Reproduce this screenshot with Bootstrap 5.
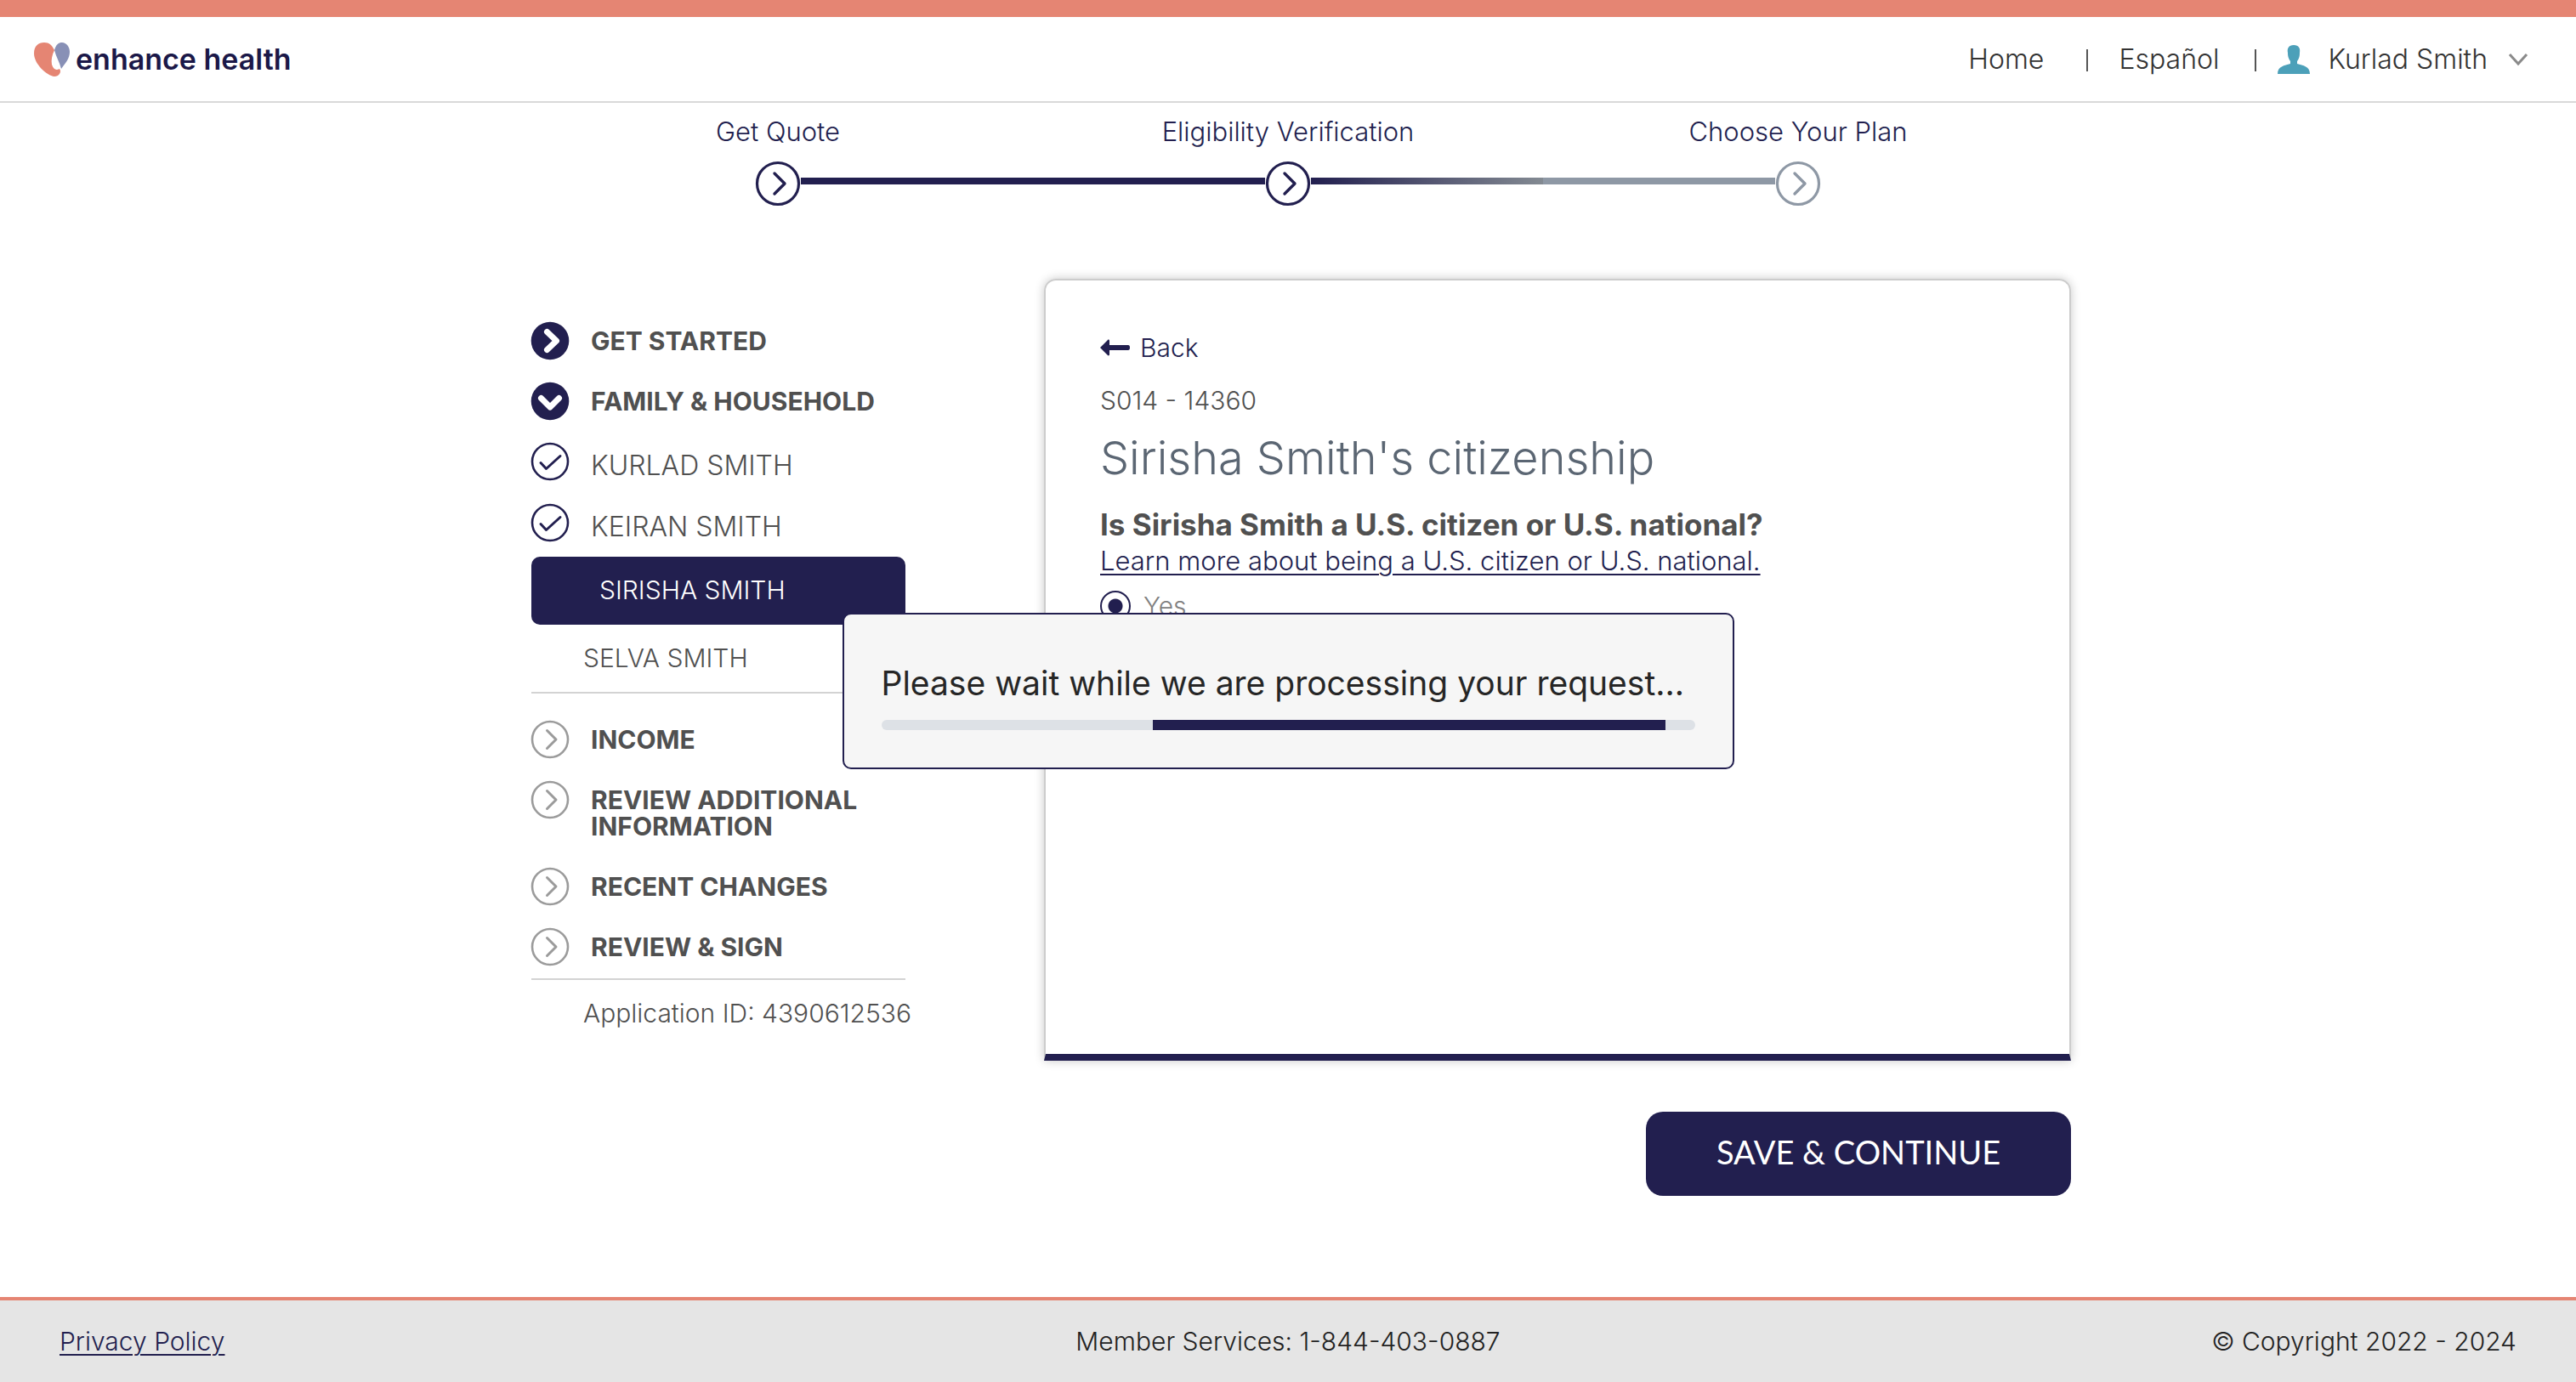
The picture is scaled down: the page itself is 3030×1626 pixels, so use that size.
<!DOCTYPE html>
<html lang="en">
<head>
<meta charset="utf-8">
<meta name="viewport" content="width=device-width, initial-scale=1">
<title>Enhance Health - Eligibility Verification</title>
<link href="https://cdn.jsdelivr.net/npm/bootstrap@5.3.0/dist/css/bootstrap.min.css" rel="stylesheet">
<style>
:root{--navy:#221f4f;--coral:#e58573;--slate:#8e98a5;--ink:#505050}
body{font-family:Inter,"Noto Sans",sans-serif;font-size:30px;font-weight:300;line-height:34px;color:#2c2c2c;background:#fff}
a{color:var(--navy)}
.site-head{border-top:20px solid var(--coral);border-bottom:2px solid #d9d9d9;height:121px;padding:0 56px 0 40px}
.brand{color:#1b1848;font-size:34px;font-weight:600;gap:6px}
.head-nav{font-size:32px}
.head-nav a,.head-nav button{color:#333;font-weight:300;font-size:32px;line-height:34px}
.bar{width:2px;height:26px;background:#555;margin:2px 24px 0 42px}
.bar.wide{margin:2px 36px 0 50px}
.stepper{max-width:1800px;padding-top:17px;color:var(--navy);font-size:31px}
.stepper li{flex:1 1 0;text-align:center}
.track{margin-top:18px;height:52px}
.track svg{width:54px;height:54px;flex:none}
.track span{flex:1;height:8px;margin-bottom:6px}
.done{background:var(--navy)}
.fade-out{background:linear-gradient(90deg,var(--navy),#838a92)}
.todo{background:var(--slate)}
.pending{color:var(--slate)}
.work{max-width:1842px;margin-top:86px;padding-left:31px}
.side{width:440px;padding-top:51px;color:var(--ink);flex:none}
.side a{color:var(--ink);text-decoration:none}
.side svg{width:46px;height:46px;flex:none;margin:-1px}
.side li>a{display:flex;gap:26px;font-size:30px;line-height:31px}
.side .sec>a{font-weight:700;padding-bottom:26px}
.side .sec span{padding:7px 0}
.side .sub>a{font-size:32px;padding-bottom:28px}
.side .sub span{padding-top:11px}
.side .sub.tight>a{padding-bottom:18px}
.side li.now>a{background:var(--navy);color:#fff;border-radius:10px;padding:24px 80px;height:80px}
.side li.plain>a{padding:24px 61px;border-bottom:2px solid #d3d3d3;margin-bottom:32px}
.side li.last>a{padding-bottom:14px;border-bottom:2px solid #d3d3d3}
.app-id{padding:24px 0 0 61px;line-height:31px;white-space:nowrap}
.sheet{min-height:920px;border:2px solid #ccc;border-bottom:8px solid var(--navy);border-radius:14px 14px 0 0;box-shadow:0 0 12px rgba(0,0,0,.22);padding:62px 64px;color:var(--ink)}
.pane{max-width:1208px}
.back{text-decoration:none;gap:12px}
.code{margin-top:28px}
.sheet h1{font-size:54px;line-height:60px;font-weight:300;color:#5b6673;margin:21px 0 28px}
.sheet h2{font-size:35px;line-height:40px;font-weight:700;margin:0}
.more{margin:6px 0 18px;font-size:31px;line-height:34px}
.more a{text-underline-offset:4px;text-decoration-thickness:2px}
.answer{gap:15px;padding:0;margin:0;min-height:0}
.answer .form-check-input{float:none;margin:0;width:36px;height:36px;border:2px solid var(--navy);background:#fff radial-gradient(circle,var(--navy) 0 8px,transparent 9px)}
.answer label{color:#808080}
.go{background:var(--navy)!important;color:#fff!important;width:500px;height:99px;border:0;border-radius:20px;margin-top:60px;padding:0 0 4px;font-family:Lato,sans-serif;font-size:38px;font-weight:400}
.site-foot{border-top:4px solid var(--coral);background:#e5e5e5;height:100px;padding:0 70px;color:#222}
.site-foot>*{flex:1}
.site-foot a{text-underline-offset:4px;text-decoration-thickness:2px}
.wait .modal-dialog{max-width:1049px}
.wait .modal-content{background:#f6f6f6;border:2px solid var(--navy);border-radius:10px;padding:60px 44px 44px;color:#262626}
.wait p{font-size:39px;line-height:42px;font-weight:400;margin:0 0 22px;white-space:nowrap}
.wait .progress{height:12px;border-radius:6px;background:#dde1e6}
.wait .progress-bar{background:var(--navy)}
</style>
</head>
<body class="d-flex flex-column min-vh-100">
<svg class="d-none" aria-hidden="true">
<symbol id="next" viewBox="0 0 46 46"><circle cx="23" cy="23" r="21" fill="none" stroke="currentColor" stroke-width="2.6"/><path d="M19.5 12.5 30 23 19.5 33.5" fill="none" stroke="currentColor" stroke-width="3" stroke-linecap="round" stroke-linejoin="round"/></symbol>
<symbol id="tick" viewBox="0 0 46 46"><circle cx="23" cy="23" r="21" fill="none" stroke="#221f4f" stroke-width="2.6"/><path d="m12 24.5 6.500 7L35 16.500" fill="none" stroke="#221f4f" stroke-width="3" stroke-linecap="round" stroke-linejoin="round"/></symbol>
<symbol id="solid" viewBox="0 0 46 46"><circle cx="23" cy="23" r="22.300" fill="#221f4f"/><path d="M19.500 12.500 30.500 23 19.500 33.500" fill="none" stroke="#fff" stroke-width="7" stroke-linecap="round" stroke-linejoin="round"/></symbol>
<symbol id="solid-down" viewBox="0 0 46 46"><circle cx="23" cy="23" r="22.300" fill="#221f4f"/><path d="M12.500 19.500 23 30 33.500 19.500" fill="none" stroke="#fff" stroke-width="7" stroke-linecap="round" stroke-linejoin="round"/></symbol>
<symbol id="stage" viewBox="0 0 54 54"><circle cx="27" cy="27" r="24.500" fill="#fff" stroke="currentColor" stroke-width="3.200"/><path d="M23 15 35 27 23 39" fill="none" stroke="currentColor" stroke-width="3.400" stroke-linecap="round" stroke-linejoin="round"/></symbol>
</svg>

<header class="site-head d-flex align-items-center justify-content-between">
  <a class="brand d-flex align-items-center text-decoration-none" href="#">
    <svg width="43" height="42" viewBox="0 0 43 42" aria-hidden="true"><path fill="#e58573" d="M0 14C0 5 5 1 12 1c6 0 9 3 12 9-3 6-4 12-3 17 2 6 5 7 9 5 3 4-1 9-6 9C15 40 0 26 0 14Z"/><path fill="#8890b6" d="M24 10c2-7 5-9 9-9 5 0 9 5 9 11 0 8-5 13-10 20C30 24 26 18 24 10Z"/></svg>
    <span>enhance health</span>
  </a>
  <nav class="head-nav d-flex align-items-center">
    <a class="text-decoration-none" href="#">Home</a><span class="bar wide"></span>
    <a class="text-decoration-none" href="#">Español</a><span class="bar"></span>
    <button class="btn p-0 border-0 d-flex align-items-center" type="button">
      <svg class="me-3" width="40" height="36" viewBox="0 0 40 36" aria-hidden="true"><path fill="#4ca0b9" d="M20 1c-6 0-8 4-7 9 0 5 1 7 3 10v3C9 25 1 26 1 35h38c0-9-8-10-15-12v-3c2-3 3-5 3-10 1-5-1-9-7-9Z"/></svg>
      <span class="ms-1">Kurlad Smith</span>
      <svg class="ms-4" width="24" height="16" viewBox="0 0 24 16" aria-hidden="true"><path d="m2 2 10 11L22 2" fill="none" stroke="#8a8a8a" stroke-width="3"/></svg>
    </button>
  </nav>
</header>

<main class="flex-grow-1 pb-5">
  <ol class="stepper list-unstyled d-flex mx-auto mb-0">
    <li>Get Quote<div class="track d-flex align-items-center"><span></span><svg><use href="#stage"/></svg><span class="done"></span></div></li>
    <li>Eligibility Verification<div class="track d-flex align-items-center"><span class="done"></span><svg><use href="#stage"/></svg><span class="fade-out"></span></div></li>
    <li>Choose Your Plan<div class="track pending d-flex align-items-center"><span class="todo"></span><svg><use href="#stage"/></svg><span></span></div></li>
  </ol>

  <div class="work mx-auto d-flex justify-content-between">
    <aside class="side">
      <ul class="list-unstyled m-0">
        <li class="sec"><a href="#"><svg><use href="#solid"/></svg><span>GET STARTED</span></a></li>
        <li class="sec"><a href="#"><svg><use href="#solid-down"/></svg><span>FAMILY &amp; HOUSEHOLD</span></a></li>
        <li class="sub"><a href="#"><svg><use href="#tick"/></svg><span>KURLAD SMITH</span></a></li>
        <li class="sub tight"><a href="#"><svg><use href="#tick"/></svg><span>KEIRAN SMITH</span></a></li>
        <li class="now"><a href="#" aria-current="step">SIRISHA SMITH</a></li>
        <li class="plain"><a href="#">SELVA SMITH</a></li>
        <li class="sec"><a href="#"><svg color="#9b9b9b"><use href="#next"/></svg><span>INCOME</span></a></li>
        <li class="sec"><a href="#"><svg color="#9b9b9b"><use href="#next"/></svg><span>REVIEW ADDITIONAL INFORMATION</span></a></li>
        <li class="sec"><a href="#"><svg color="#9b9b9b"><use href="#next"/></svg><span>RECENT CHANGES</span></a></li>
        <li class="sec last"><a href="#"><svg color="#9b9b9b"><use href="#next"/></svg><span>REVIEW &amp; SIGN</span></a></li>
      </ul>
      <div class="app-id">Application ID: 4390612536</div>
    </aside>

    <form class="pane w-100 d-flex flex-column">
      <section class="sheet">
        <a class="back d-flex align-items-center" href="#"><svg width="35" height="20" viewBox="0 0 35 20" aria-hidden="true"><path fill="#221f4f" d="M0 10 9 1c1-1 2 0 2 1v5h22q2 0 2 3t-2 3H11v5c0 1-1 2-2 1Z"/></svg>Back</a>
        <div class="code">S014 - 14360</div>
        <h1>Sirisha Smith's citizenship</h1>
        <h2>Is Sirisha Smith a U.S. citizen or U.S. national?</h2>
        <div class="more"><a href="#">Learn more about being a U.S. citizen or U.S. national.</a></div>
        <div class="answer form-check d-flex align-items-center">
          <input class="form-check-input" type="radio" name="citizen" id="citizen-yes" checked>
          <label for="citizen-yes">Yes</label>
        </div>
      </section>
      <button class="go btn align-self-end" type="button">SAVE &amp; CONTINUE</button>
    </form>
  </div>
</main>

<footer class="site-foot d-flex align-items-center">
  <div><a href="#">Privacy Policy</a></div>
  <div class="text-center">Member Services: 1-844-403-0887</div>
  <div class="text-end">© Copyright 2022 - 2024</div>
</footer>

<div class="wait modal show d-block" role="dialog" aria-label="Processing">
  <div class="modal-dialog modal-dialog-centered">
    <div class="modal-content">
      <p>Please wait while we are processing your request...</p>
      <div class="progress"><div class="progress-bar" style="width:63%;margin-left:33.4%"></div></div>
    </div>
  </div>
</div>
<script src="https://cdn.jsdelivr.net/npm/bootstrap@5.3.0/dist/js/bootstrap.bundle.min.js"></script>
</body>
</html>
